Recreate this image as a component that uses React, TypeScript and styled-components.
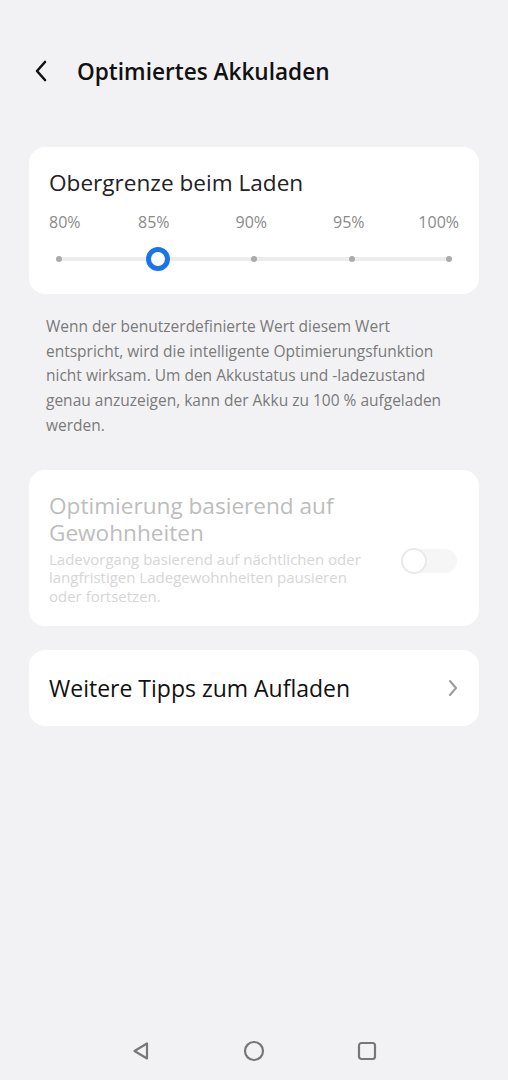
import React from 'react';
import styled, { createGlobalStyle } from 'styled-components';

const GlobalStyle = createGlobalStyle`
  html, body {
    margin: 0;
    padding: 0;
    background: #f2f2f4;
    font-family: "Open Sans", "Noto Sans", sans-serif;
  }
`;

const Page = styled.div`
  width: 508px;
  height: 1080px;
  display: flex;
  flex-direction: column;
  background: #f2f2f4;
`;

const Header = styled.div`
  height: 50px;
  margin-top: 46px;
  display: flex;
  align-items: center;
  padding: 0 0 0 33px;
  gap: 28px;
`;

const Title = styled.h1`
  margin: 0;
  font-size: 22.6px;
  font-weight: 600;
  color: #111;
`;

const Content = styled.div`
  flex: 1;
  display: flex;
  flex-direction: column;
  padding: 51px 29px 0;
`;

const Card = styled.div<{ $pad?: string }>`
  background: #fff;
  border-radius: 16px;
  padding: ${(p) => p.$pad || '20px 20px'};
`;

const CardTitle = styled.div`
  font-size: 22.6px;
  line-height: 28px;
  color: #222;
`;

const MutedTitle = styled.div`
  font-size: 22.6px;
  line-height: 27px;
  color: #bdbdbd;
`;

const Labels = styled.div`
  display: grid;
  grid-template-columns: 56px 97.5px 97.5px 97.5px 1fr;
  margin-top: 14px;
  font-size: 16px;
  color: #8a8a8a;
  line-height: 22px;
  text-align: center;

  & > span:first-child {
    text-align: left;
  }
  & > span:last-child {
    text-align: right;
  }
`;

const Track = styled.div`
  position: relative;
  height: 4px;
  margin: 24px 10px 0;
  background: #ececec;
  border-radius: 2px;
`;

const Dot = styled.span<{ $at: number }>`
  position: absolute;
  top: -1px;
  left: ${(p) => p.$at}%;
  width: 6px;
  height: 6px;
  margin-left: -3px;
  border-radius: 50%;
  background: #ababab;
`;

const Thumb = styled.span<{ $at: number }>`
  position: absolute;
  top: -10px;
  left: ${(p) => p.$at}%;
  width: 14px;
  height: 14px;
  margin-left: -11px;
  border-radius: 50%;
  border: 5px solid #1774ea;
  background: #fff;
`;

const Note = styled.p`
  margin: 20px 0 0;
  padding: 0 16px 0 17px;
  font-size: 15.5px;
  line-height: 24.7px;
  color: #7a7a7a;
`;

const ToggleRow = styled.div`
  display: flex;
  align-items: center;
  gap: 20px;
`;

const ToggleText = styled.div`
  flex: 1;
`;

const SubText = styled.div`
  font-size: 15px;
  line-height: 18.5px;
  color: #d6d6d6;
  margin-top: 4px;
`;

const Switch = styled.div`
  position: relative;
  width: 56px;
  height: 24px;
  border-radius: 12px;
  background: #f6f6f6;
  margin-top: 26px;
  flex-shrink: 0;
`;

const Knob = styled.span`
  position: absolute;
  left: 0;
  top: -1px;
  width: 22px;
  height: 22px;
  border-radius: 50%;
  border: 2px solid #eaeaea;
  background: #fff;
`;

const LinkRow = styled(Card)`
  display: flex;
  align-items: center;
  justify-content: space-between;
  height: 76px;
  box-sizing: border-box;
  margin-top: 24px;
`;

const LinkText = styled.div`
  font-size: 23px;
  color: #111;
`;

const NavBar = styled.div`
  height: 58px;
  display: flex;
  justify-content: center;
  align-items: center;
  gap: 92px;
`;

const marks = [0, 25, 50, 75, 100];

export default function App() {
  return (
    <Page>
      <GlobalStyle />
      <Header>
        <svg width="16" height="22" viewBox="0 0 16 22">
          <path d="M12 2 L4 11 L12 20" fill="none" stroke="#111" strokeWidth="2.6" strokeLinecap="round" strokeLinejoin="round" />
        </svg>
        <Title>Optimiertes Akkuladen</Title>
      </Header>
      <Content>
        <Card $pad="22px 20px 33px">
          <CardTitle>Obergrenze beim Laden</CardTitle>
          <Labels>
            <span>80%</span>
            <span>85%</span>
            <span>90%</span>
            <span>95%</span>
            <span>100%</span>
          </Labels>
          <Track>
            {marks.map((m) => (m === 25 ? null : <Dot key={m} $at={m} />))}
            <Thumb $at={25} />
          </Track>
        </Card>
        <Note>
          Wenn der benutzerdefinierte Wert diesem Wert entspricht, wird die intelligente Optimierungsfunktion nicht
          wirksam. Um den Akkustatus und -ladezustand genau anzuzeigen, kann der Akku zu 100 % aufgeladen werden.
        </Note>
        <Card $pad="22px 22px 21px 20px" style={{ marginTop: 32 }}>
          <ToggleRow>
            <ToggleText>
              <MutedTitle>Optimierung basierend auf Gewohnheiten</MutedTitle>
              <SubText>
                Ladevorgang basierend auf nächtlichen oder langfristigen Ladegewohnheiten pausieren oder fortsetzen.
              </SubText>
            </ToggleText>
            <Switch>
              <Knob />
            </Switch>
          </ToggleRow>
        </Card>
        <LinkRow $pad="0 20px">
          <LinkText>Weitere Tipps zum Aufladen</LinkText>
          <svg width="12" height="18" viewBox="0 0 12 18">
            <path d="M3 2 L9 9 L3 16" fill="none" stroke="#9a9a9a" strokeWidth="2" strokeLinecap="round" strokeLinejoin="round" />
          </svg>
        </LinkRow>
      </Content>
      <NavBar>
        <svg width="20" height="20" viewBox="0 0 20 20">
          <path d="M16 2.5 L16 17.5 L3.5 10 Z" fill="none" stroke="#777" strokeWidth="2.2" strokeLinejoin="round" />
        </svg>
        <svg width="22" height="22" viewBox="0 0 22 22">
          <circle cx="11" cy="11" r="9" fill="none" stroke="#777" strokeWidth="2.2" />
        </svg>
        <svg width="20" height="20" viewBox="0 0 20 20">
          <rect x="2" y="2" width="16" height="16" rx="2.5" fill="none" stroke="#777" strokeWidth="2.2" />
        </svg>
      </NavBar>
    </Page>
  );
}
